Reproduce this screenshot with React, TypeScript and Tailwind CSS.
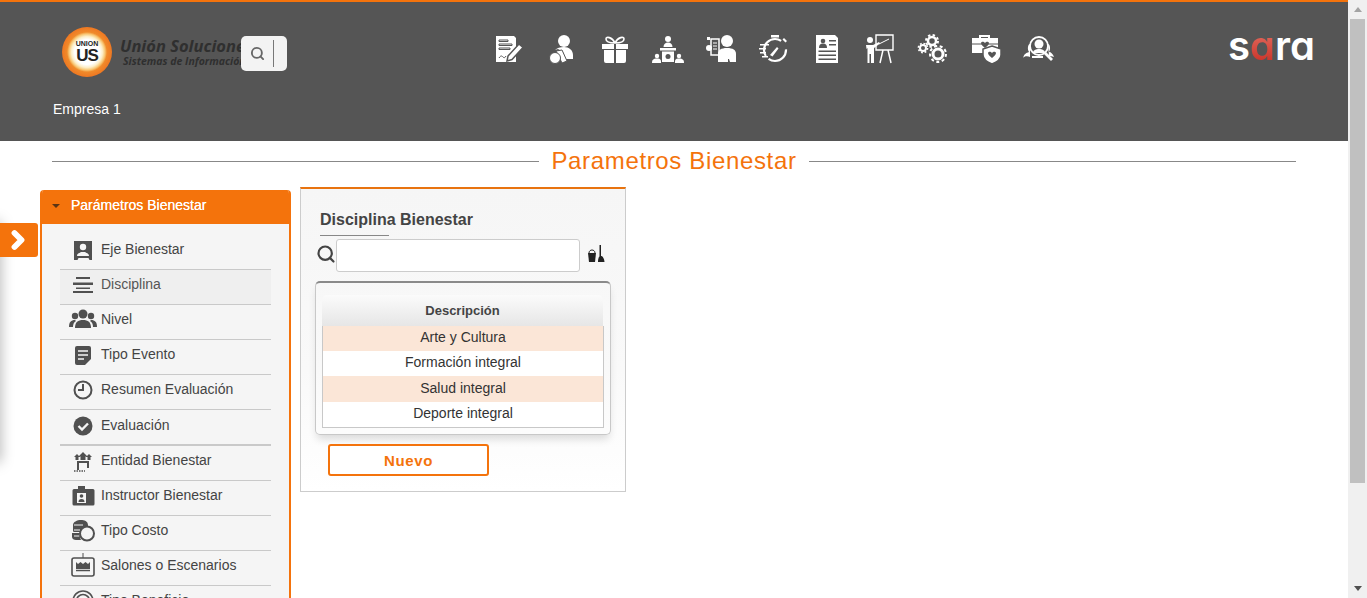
import { Search, ChevronRight } from "lucide-react";

// header icons are drawn in a 32x30 box, white on the dark bar
function HeaderIcon({ children }: { children: React.ReactNode }) {
  return (
    <div className="w-[53px] flex justify-center shrink-0">
      <svg width="32" height="30" viewBox="0 0 32 30" fill="#fff">
        {children}
      </svg>
    </div>
  );
}

const headerIcons = [
  // document with pen
  <>
    <path d="M3 2h18l2 2v24H3z" />
    <path d="M6 6h9v1.500H6zM6 10h13v1.500H6zM6 14h11v1.500H6zM6 24c2-3 3-2 4-1s2 1 3-1" stroke="#555" strokeWidth="1" fill="none" />
    <path d="M15 22l11-12 4 3.500-11 12-5 1.500z" stroke="#555" strokeWidth="1.500" />
  </>,
  // person with money
  <>
    <circle cx="18" cy="7" r="6" />
    <path d="M9 16c2-2 5-3 9-3 5 0 9 3 9 8v4h-7l-3-7-5-3z" />
    <path d="M10 17l6-1 5 11-5 2z" stroke="#555" strokeWidth="1" />
    <circle cx="9" cy="24" r="5.500" stroke="#555" strokeWidth="1" />
  </>,
  // gift
  <>
    <path d="M3 10h12v5H3zM17 10h12v5H17zM5 16h10v13H7a2 2 0 0 1-2-2zM17 16h10v11a2 2 0 0 1-2 2h-8z" />
    <path d="M16 9c-3-6-9-7-9-4 0 3 5 4 9 4zM16 9c3-6 9-7 9-4 0 3-5 4-9 4z" fill="none" stroke="#fff" strokeWidth="1.600" />
  </>,
  // speaker at a lectern
  <>
    <circle cx="16" cy="5" r="3" />
    <path d="M11.500 13c0-3 2-4.500 4.500-4.500s4.500 1.500 4.500 4.500z" />
    <path d="M8 14h16v2.500H8zM10 17.500h12V28H10z" />
    <circle cx="16" cy="22.500" r="2.500" fill="#555" />
    <circle cx="5" cy="22" r="2.200" />
    <path d="M0 29c0-3 1-4.500 5-4.500s4 1.500 4 4.500z" />
    <circle cx="27" cy="22" r="2.200" />
    <path d="M23 29c0-3 0-4.500 4-4.500s5 1.500 5 4.500z" />
  </>,
  // person holding a sheet
  <>
    <circle cx="22" cy="7" r="6" />
    <path d="M13 28v-8c0-4 3-6 9-6s9 2 9 6v8h-6l-1-3h-1v3z" />
    <path d="M6 5h8v16H6z" fill="none" stroke="#fff" strokeWidth="1.500" />
    <path d="M8 9h4M8 12h4M8 15h4" stroke="#fff" strokeWidth="1" />
    <circle cx="4" cy="14" r="3" />
    <path d="M2 3h3v3H2z" />
  </>,
  // stopwatch with speed dashes
  <>
    <circle cx="17" cy="16" r="11" fill="none" stroke="#fff" strokeWidth="2.200" strokeDasharray="24 4 30 10" />
    <path d="M13 1h8v2.500h-8zM26 4l3 3-1.500 1.500-3-3z" />
    <path d="M12 21l7-8 1.500 1.500-6 8z" />
    <path d="M2 10h9v1.600H2zM1 14h7v1.600H1zM2 18h6v1.600H2zM4 22h6v1.600H4z" />
  </>,
  // resume sheet
  <>
    <path d="M5 1h19l3 3v25H5z" />
    <circle cx="12" cy="7" r="2.300" fill="#555" />
    <path d="M8 14c0-3 1-4.500 4-4.500s4 1.500 4 4.500z" fill="#555" />
    <path d="M18 6h7v1.500h-7zM18 10h7v1.500h-7zM7.500 16.500h17.500V18H7.500zM7.500 20.500h17.500V22H7.500zM7.500 24.500h17.500V26H7.500z" fill="#555" />
  </>,
  // presenter at a board
  <>
    <circle cx="6" cy="6" r="3" />
    <path d="M2 11h7l6-3 1 1.500-6 4.500v15H7v-9H5.500v9H3.500v-15l-1 1z" />
    <path d="M12 1h17v15H12z" fill="none" stroke="#fff" strokeWidth="1.400" />
    <path d="M15 10l10-5" stroke="#fff" strokeWidth="1" />
    <path d="M19 16l-3 13M24 16l3 13" stroke="#fff" strokeWidth="1.500" />
  </>,
  // gears
  <>
    <circle cx="15" cy="7" r="4" fill="none" stroke="#fff" strokeWidth="2.500" />
    <circle cx="15" cy="7" r="6" fill="none" stroke="#fff" strokeWidth="2" strokeDasharray="2.400 2.300" />
    <circle cx="6" cy="14" r="3" fill="none" stroke="#fff" strokeWidth="2" />
    <circle cx="6" cy="14" r="4.600" fill="none" stroke="#fff" strokeWidth="1.600" strokeDasharray="1.800 1.800" />
    <circle cx="21" cy="20" r="5" fill="none" stroke="#fff" strokeWidth="3" />
    <circle cx="21" cy="20" r="8" fill="none" stroke="#fff" strokeWidth="2" strokeDasharray="3 2.600" />
  </>,
  // medical case and shield
  <>
    <path d="M9 4V1h11v3h-2V3h-7v1z" />
    <path d="M2 4h26v15H2z" />
    <path d="M2 10h26" stroke="#555" strokeWidth="1" />
    <path d="M11 9c1-2 3-1 4 0 1-1 3-2 4 0 0 2-2 3-4 5-2-2-4-3-4-5z" fill="#555" />
    <path d="M22 12l9 3v6c0 4-4 7-9 9-5-2-9-5-9-9v-6z" stroke="#555" strokeWidth="1.500" />
    <path d="M18 19c1-2 3-1 4 0 1-1 3-2 4 0 0 2-2 3-4 5-2-2-4-3-4-5z" fill="#555" />
  </>,
  // magnifier over a person
  <>
    <path d="M7 23c-2-1-6-1-7 1 1-4 3-5 6-6-2-3-1-8 1-8z" />
    <path d="M25 10c2 0 3 5 1 8 2 0 4 2 5 5-2-1-4-1-5-1z" />
    <circle cx="16" cy="12" r="9" fill="none" stroke="#fff" strokeWidth="1.800" />
    <circle cx="16" cy="10" r="4.500" />
    <path d="M10 19c0-3 3-4 6-4s6 1 6 4z" />
    <path d="M9 22h11v2H9z" />
    <path d="M23 18l7 7-2 2-7-7z" />
  </>,
];

function MenuIcon({ children }: { children: React.ReactNode }) {
  return (
    <svg width="28" height="26" viewBox="0 0 28 26" fill="#505050" className="shrink-0">
      {children}
    </svg>
  );
}

const menuItems = [
  {
    label: "Eje Bienestar",
    icon: (
      <>
        <path d="M5 4h18v19h-2.500l-1-2H9.500l-1 2H5z" />
        <circle cx="14" cy="10" r="3.200" fill="#f5f5f5" />
        <path d="M8 19c0-3 3-3 4-4h4c1 1 4 1 4 4z" fill="#f5f5f5" />
      </>
    ),
  },
  {
    label: "Disciplina",
    active: true,
    icon: <path d="M7 5h14v2H7zM4 10.500h20v2.500H4zM7 15.500h14v1.500H7zM4 19h20v2H4z" />,
  },
  {
    label: "Nivel",
    icon: (
      <>
        <circle cx="14" cy="7" r="4.500" />
        <path d="M6 21c0-6 3-8 8-8s8 2 8 8z" />
        <circle cx="6" cy="9" r="3.200" />
        <circle cx="22" cy="9" r="3.200" />
        <path d="M0 20c0-5 2-7 6-7l1 1c-2 1-3 3-3 6zM28 20c0-5-2-7-6-7l-1 1c2 1 3 3 3 6z" />
      </>
    ),
  },
  {
    label: "Tipo Evento",
    icon: (
      <>
        <path d="M6 6a2 2 0 0 1 2-2h12a2 2 0 0 1 2 2v11l-6 6H8a2 2 0 0 1-2-2z" />
        <path d="M9 9h10M9 13h10M9 17h6" stroke="#f5f5f5" strokeWidth="1.500" />
      </>
    ),
  },
  {
    label: "Resumen Evaluación",
    icon: (
      <>
        <circle cx="14" cy="13" r="8.500" fill="none" stroke="#505050" strokeWidth="2" />
        <path d="M13 7h2v7h-6v-2h4z" />
      </>
    ),
  },
  {
    label: "Evaluación",
    heavy: true,
    icon: (
      <>
        <circle cx="14" cy="13" r="9.500" />
        <path d="M9.500 13l3.500 3.500 6-6" fill="none" stroke="#f5f5f5" strokeWidth="2.400" />
      </>
    ),
  },
  {
    label: "Entidad Bienestar",
    icon: (
      <>
        <path d="M14 4l4.500 4.500h-2v3.500h-5V8.500h-2zM8 6l3 3H9.500v3h-3V9H5zM20 6l3 3h-1.500v3h-3V9H17z" />
        <path d="M8 13h12v7h-2v-5h-8v7H8z" />
        <path d="M5 23h11" stroke="#505050" strokeWidth="1.500" strokeDasharray="1.500 1" />
      </>
    ),
  },
  {
    label: "Instructor Bienestar",
    icon: (
      <>
        <path d="M9 3h7v3h8a1.500 1.500 0 0 1 1.500 1.500V21a1.500 1.500 0 0 1-1.500 1.500H5A1.500 1.500 0 0 1 3.500 21V7.500A1.500 1.500 0 0 1 5 6h4z" />
        <path d="M8 10h9v10H8z" fill="#f5f5f5" />
        <circle cx="12.500" cy="13" r="1.800" />
        <path d="M9.500 19c0-2 1-3 3-3s3 1 3 3z" />
      </>
    ),
  },
  {
    label: "Tipo Costo",
    icon: (
      <>
        <path d="M4 7c0-3 4-5 8-5 3 0 7 1 7 5v2c-4 0-7 2-8 5H5c-1 0-1-1-1-2zM3 15h8c-1 2 0 5 1 7H7c-2 0-4-1-4-3z" />
        <circle cx="18" cy="15.500" r="7" fill="#f5f5f5" stroke="#505050" strokeWidth="2" />
        <path d="M5 7h9M5 12h6M5 18h5" stroke="#f5f5f5" strokeWidth="1" />
      </>
    ),
  },
  {
    label: "Salones o Escenarios",
    icon: (
      <>
        <path d="M13.500 0h1v5h-1z" />
        <rect x="3" y="5" width="22" height="18" rx="2" fill="none" stroke="#505050" strokeWidth="1.600" />
        <path d="M7 9l2 2 2.500-2 2.500 2 2.500-2 2.500 2 2-2v7H7z" />
        <path d="M7 17.500h14" stroke="#505050" strokeWidth="1.500" />
      </>
    ),
  },
  {
    label: "Tipo Beneficio",
    icon: (
      <>
        <circle cx="14" cy="13" r="10" fill="none" stroke="#505050" strokeWidth="1.600" />
        <circle cx="14" cy="13" r="6.500" fill="none" stroke="#505050" strokeWidth="1.600" />
      </>
    ),
  },
];

const rows = ["Arte y Cultura", "Formación integral", "Salud integral", "Deporte integral"];

export default function App() {
  return (
    <div className="h-[598px] w-full flex overflow-hidden bg-white relative font-['Liberation_Sans',Arial,sans-serif]">
      <div className="flex-1 min-w-0 flex flex-col">
        {/* Top bar */}
        <header className="h-[141px] shrink-0 bg-[#555555] border-t-2 border-[#f4730c]">
          <div className="flex items-start h-[99px]">
            <div className="ml-[62px] mt-[25px] w-[50px] h-[50px] rounded-full bg-[radial-gradient(closest-side,#ffffff_0%,#ffffff_50%,#fdeec8_62%,#f8c774_72%,#f08a2a_80%,#ee7722_100%)] flex flex-col items-center justify-center shrink-0 text-[#222]">
              <span className="text-[7px] font-bold leading-[8px]">UNION</span>
              <span className="text-[17px] font-bold leading-[16px] tracking-[-1px]">US</span>
            </div>
            <div className="w-[129px] mt-[34px] overflow-hidden whitespace-nowrap shrink-0 pl-[8px] text-[#2f2f2f] italic font-bold font-['Open_Sans',sans-serif]">
              <div className="text-[16.500px] leading-[20px]">Unión Soluciones</div>
              <div className="text-[10.500px] leading-[11px] pl-[3px]">Sistemas de Información</div>
            </div>
            <div className="mt-[34px] w-[46px] h-[35px] bg-[#f3f3f3] rounded-[5px] flex items-center shrink-0 pl-[9px]">
              <Search size={15} strokeWidth={3} color="#666" />
              <div className="ml-[8px] w-px h-[27px] bg-[#777]" />
            </div>
            <nav className="flex ml-[195px] mt-[32px]">
              {headerIcons.map((icon, i) => (
                <HeaderIcon key={i}>{icon}</HeaderIcon>
              ))}
            </nav>
            <div className="ml-auto mr-[33px] mt-[20px] text-[40px] leading-[48px] font-semibold text-white font-['Inter',sans-serif] [font-feature-settings:'cv11']">
              s<span className="bg-[linear-gradient(#ea7d70,#c4261c)] bg-clip-text text-transparent">a</span>ra
            </div>
          </div>
          <div className="pl-[53px] text-[14px] leading-[16px] text-white">Empresa 1</div>
        </header>

        {/* Page title */}
        <div className="flex items-center gap-[12px] ml-[52px] mr-[52px] mt-[6px] h-[28px] shrink-0">
          <div className="flex-1 h-px bg-[#888]" />
          <h1 className="text-[24px] leading-[28px] text-[#f4730c] tracking-[0.65px]">Parametros Bienestar</h1>
          <div className="flex-1 h-px bg-[#888]" />
        </div>

        <div className="flex items-start pl-[40px] mt-[15px] gap-[9px]">
          {/* Side menu */}
          <aside className="w-[251px] shrink-0 rounded-t-[4px] overflow-hidden border-x-2 border-[#f4730c] bg-[#f5f5f5]">
            <div className="h-[34px] bg-[#f4730c] flex items-center pl-[10px] pb-[3px]">
              <span className="w-0 h-0 border-x-[4px] border-x-transparent border-t-[4px] border-t-[#5a3414]" />
              <span className="ml-[11px] text-[14px] text-white [text-shadow:0_0_0.500px_#fff]">Parámetros Bienestar</span>
            </div>
            <ul className="mx-[18px] pt-[11px]">
              {menuItems.map((item) => (
                <li
                  key={item.label}
                  className={`flex items-start border-[#c9c9c9] pl-[9px] ${item.heavy ? "h-[36px] border-b-2 pt-[3px]" : "h-[35px] border-b pt-[2px]"} ${item.active ? "bg-[#efefef]" : ""}`}
                >
                  <MenuIcon>{item.icon}</MenuIcon>
                  <span className={`ml-[4px] text-[14px] leading-[16px] pt-[4px] ${item.active ? "text-[#555]" : "text-[#444]"}`}>{item.label}</span>
                </li>
              ))}
            </ul>
          </aside>

          {/* Discipline panel */}
          <section className="w-[326px] h-[305px] -mt-[3px] shrink-0 border border-[#cccccc] border-t-2 border-t-[#e8730f] bg-[linear-gradient(#f6f6f6,#f9f9f9_60%,#ffffff)] px-[14px]">
            <h2 className="ml-[5px] mt-[21px] text-[16px] leading-[20px] font-bold text-[#444]">Disciplina Bienestar</h2>
            <div className="ml-[5px] mt-[5px] w-[69px] h-px bg-[#888]" />
            <div className="flex items-center mt-[3px] ml-px">
              <Search size={20} strokeWidth={2.6} color="#444" className="shrink-0 -mt-[3px]" />
              <input className="w-[244px] h-[33px] bg-white border border-[#cccccc] rounded-[3px]" />
              <svg width="18" height="18" viewBox="0 0 18 18" className="ml-[7px] shrink-0 -mt-[3px]" fill="#222">
                <path d="M1 8h8l-1 9H2z" />
                <path d="M2 8c0-4 6-4 6 0" fill="none" stroke="#222" strokeWidth="1" />
                <path d="M12.500 0h1.500v11h-1.500zM11 17c0-3 1-6 2-6h1.500c1 0 3 3 3 6z" />
              </svg>
            </div>
            <div className="mt-[9px] h-[154px] border border-[#c8c8c8] border-t-2 border-t-[#8a8a8a] rounded-[5px] shadow-[0_6px_8px_-2px_rgba(0,0,0,0.14)] pl-[6px] pr-[6px] pt-[12px]">
              <div className="h-[31px] w-[281px] rounded-t-[5px] bg-[linear-gradient(#fbfbfb,#e6e6e6)] flex items-center justify-center text-[13px] font-bold text-[#444]">
                Descripción
              </div>
              <div className="w-[282px] border-x border-b border-[#c8c8c8] text-[14px] text-[#333] text-center">
                {rows.map((row, i) => (
                  <div key={row} className={`${i === 2 ? "h-[26px] leading-[24px]" : "h-[25px]"} ${i === 0 ? "leading-[22px]" : ""} ${i % 2 === 0 ? "bg-[#fbe6d7]" : "bg-white leading-[22px]"}`}>
                    {row}
                  </div>
                ))}
              </div>
            </div>
            <button className="ml-[13px] mt-[9px] w-[161px] h-[32px] pt-[2px] border-2 border-[#f4730c] rounded-[3px] bg-white text-[15px] font-bold tracking-[0.6px] text-[#f4730c] block">
              Nuevo
            </button>
          </section>
        </div>
      </div>

      {/* Page scrollbar */}
      <div className="w-[19px] shrink-0 bg-[#f0f0f0] flex flex-col pl-[2px] pr-[2px]">
        <div className="h-[19px] flex items-center justify-center shrink-0">
          <span className="w-0 h-0 border-x-[4.500px] border-x-transparent border-b-[5px] border-b-[#a3a3a3]" />
        </div>
        <div className="w-full h-[464px] bg-[#c0c0c0] shrink-0" />
        <div className="flex-1" />
        <div className="h-[19px] flex items-center justify-center shrink-0">
          <span className="w-0 h-0 border-x-[4.500px] border-x-transparent border-t-[5px] border-t-[#505050]" />
        </div>
      </div>

      {/* Collapsed side drawer with its toggle */}
      <div className="absolute left-[-10px] top-[222px] w-[10px] h-[240px] shadow-[0_0_14px_rgba(0,0,0,0.35)]" />
      <button className="absolute left-0 top-[223px] w-[38px] h-[34px] bg-[#f4730c] rounded-r-[3px] flex items-center justify-center pr-[3px]">
        <ChevronRight size={28} strokeWidth={5} color="#fff" />
      </button>
    </div>
  );
}
